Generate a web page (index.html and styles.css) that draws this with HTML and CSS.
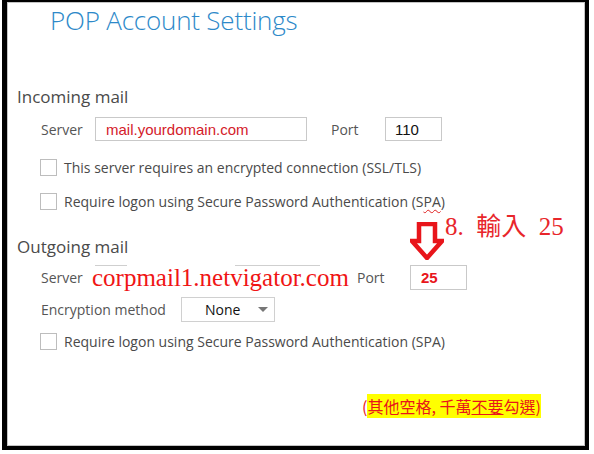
FILE: index.html
```html
<!DOCTYPE html>
<html lang="zh-Hant">
<head>
    <meta charset="UTF-8">
    <meta name="viewport" content="width=device-width, initial-scale=1.0">
    <title>POP Account Settings</title>
    <link rel="stylesheet" href="styles.css">
</head>
<body>
    <div class="frame">
        <h1 class="title">POP Account Settings</h1>

        <!-- Incoming -->
        <h2 class="section incoming">Incoming mail</h2>
        <div class="row server-row">
            <span class="label">Server</span>
            <div class="field server-field red-text">mail.yourdomain.com</div>
            <span class="label port-label">Port</span>
            <div class="field port-field">110</div>
        </div>
        <label class="check check-first"><span class="box"></span>This server requires an encrypted connection (SSL/TLS)</label>
        <label class="check"><span class="box"></span>Require logon using Secure Password Authentication (S<span class="spell">PA</span>)</label>

        <!-- Outgoing -->
        <h2 class="section outgoing">Outgoing mail</h2>
        <div class="row out-row">
            <span class="label">Server</span>
            <div class="ghost-field"></div>
            <span class="label out-port-label">Port</span>
            <div class="field port-field bold-red">25</div>
        </div>
        <div class="row enc-row">
            <span class="label enc-label">Encryption method</span>
            <div class="dropdown"><span>None</span><span class="caret"></span></div>
        </div>
        <label class="check check-last"><span class="box"></span>Require logon using Secure Password Authentication (SPA)</label>

        <!-- annotations pasted on top -->
        <svg class="arrow" width="34" height="38" viewBox="0 0 34 38">
            <path d="M9 2 H25 V19 H32 L17 36 L2 19 H9 Z" fill="#fff" stroke="#e8151b" stroke-width="4.5" stroke-linejoin="miter"/>
        </svg>
        <div class="note-step">8.&nbsp; 輸入&nbsp; 25</div>
        <div class="note-server">corpmail1.netvigator.com</div>
        <div class="note-warn">(<span class="hl">其他空格, 千萬<u>不要</u>勾選)</span></div>
    </div>
</body>
</html>
```

FILE: styles.css
```css
body {
    margin: 0;
    background-color: #fff;
    font-family: "Open Sans", "Noto Sans", sans-serif;
    color: #444;
}

.frame {
    position: relative;
    box-sizing: border-box;
    width: 587px;
    height: 450px;
    margin-left: 2px;
    border-style: solid;
    border-color: #000;
    border-width: 2px 4px 4px 5px;
    box-shadow: inset 0 0 0 1px #c4c4c4;
    padding-left: 10px;
    display: flex;
    flex-direction: column;
    align-items: flex-start;
}

.title {
    margin: 1px 0 0 33px;
    font-size: 26px;
    font-weight: 300;
    line-height: 34px;
    letter-spacing: -0.2px;
    color: #2d89c9;
}

.section {
    margin: 0;
    font-size: 17px;
    font-weight: 400;
    line-height: 22px;
    color: #4a4a4a;
}

.incoming {
    margin-top: 49px;
}

.outgoing {
    margin-top: 26px;
}

.row {
    display: flex;
    align-items: center;
    padding-left: 24px;
    font-size: 14px;
}

.label {
    color: #555;
}

.server-row {
    margin-top: 9px;
    height: 24px;
}

.server-row .label:first-child,
.out-row .label:first-child {
    width: 54px;
}

.field {
    box-sizing: border-box;
    height: 24px;
    border: 1px solid #c9c9c9;
    display: flex;
    align-items: center;
    font-family: "Liberation Sans", Arial, sans-serif;
    font-size: 15px;
    color: #111;
}

.server-field {
    width: 212px;
    padding-left: 10px;
}

.red-text {
    color: #d4202a;
}

.port-label {
    margin-left: 24px;
    width: 54px;
}

.port-field {
    width: 57px;
    padding-left: 9px;
}

.check {
    display: flex;
    align-items: center;
    height: 18px;
    margin-left: 23px;
    font-size: 14px;
    color: #4a4a4a;
    margin-top: 16px;
}

.check-first {
    margin-top: 17px;
}

.check-last {
    margin-top: 10px;
}

.box {
    box-sizing: border-box;
    width: 17px;
    height: 17px;
    border: 1px solid #bdbdbd;
    margin-right: 7px;
}

.spell {
    text-decoration: underline wavy #e02020 1px;
    text-underline-offset: 2px;
}

.out-row {
    margin-top: 7px;
    height: 25px;
}

.ghost-field {
    width: 225px;
    height: 25px;
    background-image: linear-gradient(to right, #cfcfcf 32px, transparent 32px, transparent 140px, #cfcfcf 140px);
    background-size: 100% 1px;
    background-repeat: no-repeat;
}

.out-port-label {
    margin-left: 37px;
    width: 53px;
}

.out-row .port-field {
    height: 25px;
    padding-left: 10px;
}

.bold-red {
    color: #e8151b;
    font-weight: bold;
}

.enc-row {
    margin-top: 7px;
    height: 25px;
}

.enc-label {
    width: 140px;
}

.dropdown {
    box-sizing: border-box;
    width: 94px;
    height: 25px;
    border: 1px solid #d0d0d0;
    display: flex;
    align-items: center;
    justify-content: space-between;
    padding: 0 6px 0 23px;
    font-size: 14px;
    color: #111;
}

.caret {
    width: 0;
    height: 0;
    border-left: 5px solid transparent;
    border-right: 5px solid transparent;
    border-top: 5px solid #777;
}

.arrow {
    position: absolute;
    left: 403px;
    top: 220px;
}

.note-step {
    position: absolute;
    left: 438px;
    top: 210px;
    font-family: "Liberation Serif", "Noto Sans CJK TC", serif;
    font-size: 25px;
    line-height: 30px;
    color: #e8262b;
    white-space: nowrap;
}

.note-server {
    position: absolute;
    left: 85px;
    top: 261px;
    font-family: "Liberation Serif", serif;
    font-size: 25px;
    line-height: 30px;
    color: #f01515;
    white-space: nowrap;
}

.note-warn {
    position: absolute;
    left: 355px;
    top: 394px;
    font-family: "Noto Sans CJK TC", sans-serif;
    font-size: 16px;
    line-height: 21px;
    color: #e8151b;
    white-space: nowrap;
}

.hl {
    background-color: #ffff00;
}
```
